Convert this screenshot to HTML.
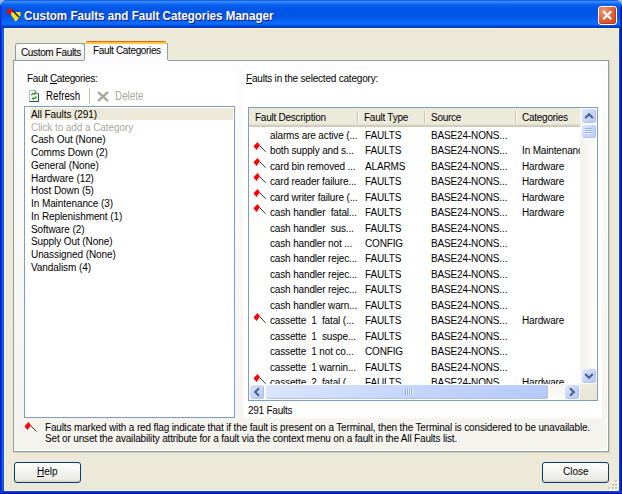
<!DOCTYPE html>
<html><head><meta charset="utf-8"><style>
*{margin:0;padding:0;box-sizing:border-box}
html,body{width:622px;height:494px;overflow:hidden;background:#A6BAE6}
body{position:relative;font-family:"Liberation Sans",sans-serif;}
.a{position:absolute}
.t{position:absolute;white-space:nowrap}
u{text-decoration:none;border-bottom:1px solid currentColor;display:inline-block;line-height:9px}
</style></head><body>
<div class="a" style="left:0px;top:0px;width:622px;height:494px;background:#0A3FD8;border-radius:7px 7px 0 0"></div>
<div class="a" style="left:0px;top:0px;width:622px;height:28px;border-radius:7px 7px 0 0;background:linear-gradient(#0A3DD6 0px,#2F84FF 1px,#3C92FF 2px,#1E72F8 3px,#0962EE 5px,#0056E6 8px,#0055E5 16px,#0A63F4 20px,#0D6AFA 24px,#0054E4 25.5px,#0040CE 26.5px,#0030B4 28px)"></div>
<div class="a" style="left:0px;top:6px;width:2px;height:22px;background:linear-gradient(90deg,#0A2ED0 0,#0A2ED0 1px,#0848E4 1px)"></div>
<div class="a" style="left:0px;top:28px;width:4px;height:466px;background:linear-gradient(90deg,#0019CF 0,#0019CF 1px,#0831D9 1px,#0831D9 2px,#166AEE 2px,#166AEE 3px,#0855DD 3px)"></div>
<div class="a" style="left:620px;top:6px;width:2px;height:22px;background:linear-gradient(90deg,#0036D8 0,#0036D8 1px,#001A9A 1px)"></div>
<div class="a" style="left:619px;top:28px;width:3px;height:466px;background:linear-gradient(90deg,#0046E8 0,#0046E8 1px,#0030D0 1px,#0030D0 2px,#001090 2px)"></div>
<div class="a" style="left:0px;top:491px;width:622px;height:3px;background:linear-gradient(#0046E8 0,#0046E8 1px,#0030D0 1px,#0030D0 2px,#001090 2px)"></div>
<div class="a" style="left:4px;top:28px;width:615px;height:463px;background:#ECE9D8;border:1px solid #FBF6E2;border-right-color:#FBF6E2"></div>
<svg class="a" style="left:4px;top:6px" width="20" height="18" viewBox="0 0 20 18">
<polygon points="7.1,6 16.5,6 16.5,9.6 11.8,15.8 7.1,9.1" fill="#F8E01A"/>
<line x1="9" y1="5" x2="15" y2="11" stroke="#000" stroke-width="1.2"/>
<polygon points="2,5.5 6.5,2 8.8,4.6 5.3,8.8" fill="#FF0000"/>
</svg><div class="t" style="left:23.5px;top:9.17px;font-size:12.5px;line-height:14px;color:#FFF;font-weight:bold;text-shadow:1px 1px 0 #0A1883;transform:scaleX(0.928);transform-origin:0 0;">Custom Faults and Fault Categories Manager</div>
<div class="a" style="left:598px;top:6px;width:19px;height:19px;border:1px solid #fff;border-radius:3px;background:radial-gradient(circle at 30% 25%,#EE9A78 0,#E0663A 45%,#C84418 100%);box-shadow:inset -1px -1px 0 #C43A10"></div>
<svg class="a" style="left:598px;top:6px" width="19" height="19" viewBox="0 0 19 19">
<path d="M5.2 5.2 L13.2 13.2 M13.2 5.2 L5.2 13.2" stroke="#fff" stroke-width="2.3" stroke-linecap="butt"/>
</svg><div class="a" style="left:13px;top:60px;width:596px;height:392px;border:1px solid #919B9C;background:linear-gradient(#FCFCFE,#F4F3EE);box-shadow:1px 1px 0 #D8D5C6, 2px 2px 0 #E4E1D1"></div>
<div class="a" style="left:607px;top:61px;width:1px;height:390px;background:#FFFFFF"></div>
<div class="a" style="left:14px;top:450px;width:594px;height:1px;background:#FFFFFF"></div>
<div class="a" style="left:15px;top:43px;width:70px;height:17px;border:1px solid #919B9C;border-bottom:none;border-radius:3px 3px 0 0;background:linear-gradient(#FFFFFF,#ECEBE6)"></div>
<div class="t" style="left:21px;top:45.53px;font-size:10px;line-height:14px;color:#000;letter-spacing:-0.35px;">Custom Faults</div>
<div class="a" style="left:84px;top:41px;width:84px;height:20px;background:#FCFCFE"></div>
<div class="a" style="left:84px;top:43px;width:1px;height:17px;background:#919B9C"></div>
<div class="a" style="left:167px;top:43px;width:1px;height:17px;background:#919B9C"></div>
<div class="a" style="left:85px;top:41px;width:82px;height:3px;border-radius:3px 3px 0 0;background:linear-gradient(#E5641C 0,#E5641C 1px,#FFC73C 1px)"></div>
<div class="t" style="left:93px;top:44.03px;font-size:10px;line-height:14px;color:#000;letter-spacing:-0.35px;">Fault Categories</div>
<div class="a" style="left:24px;top:70px;width:211px;height:348px;background:#FFFFFF"></div>
<div class="t" style="left:27px;top:72.03px;font-size:10px;line-height:14px;color:#000;letter-spacing:-0.35px;">Fault <u>C</u>ategories:</div>
<svg class="a" style="left:29px;top:90px" width="11" height="13" viewBox="0 0 11 13">
<path d="M0.5 0.5 H6.5 L9.5 3.5 V11.5 H0.5 Z" fill="#F4F7FC" stroke="#A9BAD6"/>
<path d="M9.5 3.5 V11.5 H0.5" fill="none" stroke="#2E4470"/>
<path d="M6.5 0.5 V3.5 H9.5" fill="#DCE5F2" stroke="#6A7FA6" stroke-width="0.8"/>
<path d="M2.3 5.2 Q3.5 3.2 6 3.6" fill="none" stroke="#3F9A10" stroke-width="1.5"/>
<path d="M5.3 1.9 L7.6 3.6 L5.3 5.3 Z" fill="#3F9A10"/>
<path d="M7.5 6.6 Q6.5 8.8 4 8.6" fill="none" stroke="#3F9A10" stroke-width="1.5"/>
<path d="M4.7 6.9 L2.4 8.6 L4.7 10.3 Z" fill="#3F9A10"/>
</svg><div class="t" style="left:45.5px;top:88.77px;font-size:12.5px;line-height:14px;color:#000;letter-spacing:0px;transform:scaleX(0.78);transform-origin:0 0;">Refresh</div>
<div class="a" style="left:89px;top:88px;width:1px;height:16px;background:#C5C2B2"></div>
<svg class="a" style="left:96px;top:90px" width="14" height="13" viewBox="0 0 14 13">
<path d="M2 1.8 L12 11.2 M12 1.8 L2 11.2" stroke="#ACA899" stroke-width="2.4"/>
</svg><div class="t" style="left:114.5px;top:88.87px;font-size:12.5px;line-height:14px;color:#ACA899;letter-spacing:0px;transform:scaleX(0.79);transform-origin:0 0;">Delete</div>
<div class="a" style="left:24px;top:106px;width:211px;height:312px;border:1px solid #7F9DB9;background:#FFFFFF"></div>
<div class="a" style="left:30px;top:108px;width:203px;height:12px;background:#ECE9D8"></div>
<div class="t" style="left:31px;top:107.83px;font-size:10px;line-height:14px;color:#000;letter-spacing:-0.08px;">All Faults (291)</div>
<div class="t" style="left:31px;top:120.59px;font-size:10px;line-height:14px;color:#ACA899;letter-spacing:-0.08px;">Click to add a Category</div>
<div class="t" style="left:31px;top:133.34px;font-size:10px;line-height:14px;color:#000;letter-spacing:-0.08px;">Cash Out (None)</div>
<div class="t" style="left:31px;top:146.09px;font-size:10px;line-height:14px;color:#000;letter-spacing:-0.08px;">Comms Down (2)</div>
<div class="t" style="left:31px;top:158.84px;font-size:10px;line-height:14px;color:#000;letter-spacing:-0.08px;">General (None)</div>
<div class="t" style="left:31px;top:171.59px;font-size:10px;line-height:14px;color:#000;letter-spacing:-0.08px;">Hardware (12)</div>
<div class="t" style="left:31px;top:184.34px;font-size:10px;line-height:14px;color:#000;letter-spacing:-0.08px;">Host Down (5)</div>
<div class="t" style="left:31px;top:197.09px;font-size:10px;line-height:14px;color:#000;letter-spacing:-0.08px;">In Maintenance (3)</div>
<div class="t" style="left:31px;top:209.84px;font-size:10px;line-height:14px;color:#000;letter-spacing:-0.08px;">In Replenishment (1)</div>
<div class="t" style="left:31px;top:222.59px;font-size:10px;line-height:14px;color:#000;letter-spacing:-0.08px;">Software (2)</div>
<div class="t" style="left:31px;top:235.34px;font-size:10px;line-height:14px;color:#000;letter-spacing:-0.08px;">Supply Out (None)</div>
<div class="t" style="left:31px;top:248.09px;font-size:10px;line-height:14px;color:#000;letter-spacing:-0.08px;">Unassigned (None)</div>
<div class="t" style="left:31px;top:260.84px;font-size:10px;line-height:14px;color:#000;letter-spacing:-0.08px;">Vandalism (4)</div>
<div class="a" style="left:243px;top:70px;width:359px;height:348px;background:#FFFFFF"></div>
<div class="t" style="left:246px;top:71.73px;font-size:10px;line-height:14px;color:#000;letter-spacing:-0.2px;"><u>F</u>aults in the selected category:</div>
<div class="a" style="left:248px;top:107px;width:350px;height:294px;border:1px solid #7F9DB9;background:#FFFFFF"></div>
<div class="a" style="left:249px;top:108px;width:331px;height:19px;background:linear-gradient(#EBEADB 0,#EBEADB 16px,#E2DECD 16px,#E2DECD 17px,#D6D2C2 17px,#D6D2C2 18px,#CBC7B8 18px)"></div>
<div class="a" style="left:357px;top:111px;width:1px;height:12px;background:#C7C5B2"></div>
<div class="a" style="left:358px;top:111px;width:1px;height:12px;background:#FFFFFF"></div>
<div class="a" style="left:424px;top:111px;width:1px;height:12px;background:#C7C5B2"></div>
<div class="a" style="left:425px;top:111px;width:1px;height:12px;background:#FFFFFF"></div>
<div class="a" style="left:515px;top:111px;width:1px;height:12px;background:#C7C5B2"></div>
<div class="a" style="left:516px;top:111px;width:1px;height:12px;background:#FFFFFF"></div>
<div class="t" style="left:255px;top:110.73px;font-size:10px;line-height:14px;color:#000;letter-spacing:-0.25px;">Fault Description</div>
<div class="t" style="left:364px;top:110.73px;font-size:10px;line-height:14px;color:#000;letter-spacing:-0.25px;">Fault Type</div>
<div class="t" style="left:431px;top:110.73px;font-size:10px;line-height:14px;color:#000;letter-spacing:-0.25px;">Source</div>
<div class="t" style="left:522px;top:110.73px;font-size:10px;line-height:14px;color:#000;letter-spacing:-0.25px;">Categories</div>
<div class="a" style="left:249px;top:127px;width:331px;height:257px;overflow:hidden">
<div class="a" style="left:-249px;top:-127px;width:622px;height:494px">
<div class="t" style="left:270px;top:128.73px;font-size:10px;line-height:14px;color:#000;letter-spacing:-0.15px;">alarms are active (...</div>
<div class="t" style="left:365px;top:128.73px;font-size:10px;line-height:14px;color:#000;letter-spacing:-0.15px;">FAULTS</div>
<div class="t" style="left:431px;top:128.73px;font-size:10px;line-height:14px;color:#000;letter-spacing:-0.15px;">BASE24-NONS...</div>
<svg class="a" style="left:253px;top:142.37px" width="14" height="11" viewBox="0 0 14 11">
<polygon points="0.5,4.3 4.5,0 7,3.3 3.5,8" fill="#FF0000"/>
<line x1="7" y1="4" x2="12.6" y2="9.7" stroke="#111" stroke-width="0.85"/>
</svg><div class="t" style="left:270px;top:144.20px;font-size:10px;line-height:14px;color:#000;letter-spacing:-0.15px;">both supply and s...</div>
<div class="t" style="left:365px;top:144.20px;font-size:10px;line-height:14px;color:#000;letter-spacing:-0.15px;">FAULTS</div>
<div class="t" style="left:431px;top:144.20px;font-size:10px;line-height:14px;color:#000;letter-spacing:-0.15px;">BASE24-NONS...</div>
<div class="t" style="left:522px;top:144.20px;font-size:10px;line-height:14px;color:#000;letter-spacing:-0.15px;width:58px;overflow:hidden;">In Maintenance</div>
<svg class="a" style="left:253px;top:157.84px" width="14" height="11" viewBox="0 0 14 11">
<polygon points="0.5,4.3 4.5,0 7,3.3 3.5,8" fill="#FF0000"/>
<line x1="7" y1="4" x2="12.6" y2="9.7" stroke="#111" stroke-width="0.85"/>
</svg><div class="t" style="left:270px;top:159.67px;font-size:10px;line-height:14px;color:#000;letter-spacing:-0.15px;">card bin removed ...</div>
<div class="t" style="left:365px;top:159.67px;font-size:10px;line-height:14px;color:#000;letter-spacing:-0.15px;">ALARMS</div>
<div class="t" style="left:431px;top:159.67px;font-size:10px;line-height:14px;color:#000;letter-spacing:-0.15px;">BASE24-NONS...</div>
<div class="t" style="left:522px;top:159.67px;font-size:10px;line-height:14px;color:#000;letter-spacing:-0.15px;width:58px;overflow:hidden;">Hardware</div>
<svg class="a" style="left:253px;top:173.31px" width="14" height="11" viewBox="0 0 14 11">
<polygon points="0.5,4.3 4.5,0 7,3.3 3.5,8" fill="#FF0000"/>
<line x1="7" y1="4" x2="12.6" y2="9.7" stroke="#111" stroke-width="0.85"/>
</svg><div class="t" style="left:270px;top:175.14px;font-size:10px;line-height:14px;color:#000;letter-spacing:-0.15px;">card reader failure...</div>
<div class="t" style="left:365px;top:175.14px;font-size:10px;line-height:14px;color:#000;letter-spacing:-0.15px;">FAULTS</div>
<div class="t" style="left:431px;top:175.14px;font-size:10px;line-height:14px;color:#000;letter-spacing:-0.15px;">BASE24-NONS...</div>
<div class="t" style="left:522px;top:175.14px;font-size:10px;line-height:14px;color:#000;letter-spacing:-0.15px;width:58px;overflow:hidden;">Hardware</div>
<svg class="a" style="left:253px;top:188.78px" width="14" height="11" viewBox="0 0 14 11">
<polygon points="0.5,4.3 4.5,0 7,3.3 3.5,8" fill="#FF0000"/>
<line x1="7" y1="4" x2="12.6" y2="9.7" stroke="#111" stroke-width="0.85"/>
</svg><div class="t" style="left:270px;top:190.61px;font-size:10px;line-height:14px;color:#000;letter-spacing:-0.15px;">card writer failure (...</div>
<div class="t" style="left:365px;top:190.61px;font-size:10px;line-height:14px;color:#000;letter-spacing:-0.15px;">FAULTS</div>
<div class="t" style="left:431px;top:190.61px;font-size:10px;line-height:14px;color:#000;letter-spacing:-0.15px;">BASE24-NONS...</div>
<div class="t" style="left:522px;top:190.61px;font-size:10px;line-height:14px;color:#000;letter-spacing:-0.15px;width:58px;overflow:hidden;">Hardware</div>
<svg class="a" style="left:253px;top:204.25px" width="14" height="11" viewBox="0 0 14 11">
<polygon points="0.5,4.3 4.5,0 7,3.3 3.5,8" fill="#FF0000"/>
<line x1="7" y1="4" x2="12.6" y2="9.7" stroke="#111" stroke-width="0.85"/>
</svg><div class="t" style="left:270px;top:206.09px;font-size:10px;line-height:14px;color:#000;letter-spacing:-0.15px;">cash handler&nbsp; fatal...</div>
<div class="t" style="left:365px;top:206.09px;font-size:10px;line-height:14px;color:#000;letter-spacing:-0.15px;">FAULTS</div>
<div class="t" style="left:431px;top:206.09px;font-size:10px;line-height:14px;color:#000;letter-spacing:-0.15px;">BASE24-NONS...</div>
<div class="t" style="left:522px;top:206.09px;font-size:10px;line-height:14px;color:#000;letter-spacing:-0.15px;width:58px;overflow:hidden;">Hardware</div>
<div class="t" style="left:270px;top:221.55px;font-size:10px;line-height:14px;color:#000;letter-spacing:-0.15px;">cash handler&nbsp; sus...</div>
<div class="t" style="left:365px;top:221.55px;font-size:10px;line-height:14px;color:#000;letter-spacing:-0.15px;">FAULTS</div>
<div class="t" style="left:431px;top:221.55px;font-size:10px;line-height:14px;color:#000;letter-spacing:-0.15px;">BASE24-NONS...</div>
<div class="t" style="left:270px;top:237.03px;font-size:10px;line-height:14px;color:#000;letter-spacing:-0.15px;">cash handler not ...</div>
<div class="t" style="left:365px;top:237.03px;font-size:10px;line-height:14px;color:#000;letter-spacing:-0.15px;">CONFIG</div>
<div class="t" style="left:431px;top:237.03px;font-size:10px;line-height:14px;color:#000;letter-spacing:-0.15px;">BASE24-NONS...</div>
<div class="t" style="left:270px;top:252.49px;font-size:10px;line-height:14px;color:#000;letter-spacing:-0.15px;">cash handler rejec...</div>
<div class="t" style="left:365px;top:252.49px;font-size:10px;line-height:14px;color:#000;letter-spacing:-0.15px;">FAULTS</div>
<div class="t" style="left:431px;top:252.49px;font-size:10px;line-height:14px;color:#000;letter-spacing:-0.15px;">BASE24-NONS...</div>
<div class="t" style="left:270px;top:267.97px;font-size:10px;line-height:14px;color:#000;letter-spacing:-0.15px;">cash handler rejec...</div>
<div class="t" style="left:365px;top:267.97px;font-size:10px;line-height:14px;color:#000;letter-spacing:-0.15px;">FAULTS</div>
<div class="t" style="left:431px;top:267.97px;font-size:10px;line-height:14px;color:#000;letter-spacing:-0.15px;">BASE24-NONS...</div>
<div class="t" style="left:270px;top:283.44px;font-size:10px;line-height:14px;color:#000;letter-spacing:-0.15px;">cash handler rejec...</div>
<div class="t" style="left:365px;top:283.44px;font-size:10px;line-height:14px;color:#000;letter-spacing:-0.15px;">FAULTS</div>
<div class="t" style="left:431px;top:283.44px;font-size:10px;line-height:14px;color:#000;letter-spacing:-0.15px;">BASE24-NONS...</div>
<div class="t" style="left:270px;top:298.91px;font-size:10px;line-height:14px;color:#000;letter-spacing:-0.15px;">cash handler warn...</div>
<div class="t" style="left:365px;top:298.91px;font-size:10px;line-height:14px;color:#000;letter-spacing:-0.15px;">FAULTS</div>
<div class="t" style="left:431px;top:298.91px;font-size:10px;line-height:14px;color:#000;letter-spacing:-0.15px;">BASE24-NONS...</div>
<svg class="a" style="left:253px;top:312.54px" width="14" height="11" viewBox="0 0 14 11">
<polygon points="0.5,4.3 4.5,0 7,3.3 3.5,8" fill="#FF0000"/>
<line x1="7" y1="4" x2="12.6" y2="9.7" stroke="#111" stroke-width="0.85"/>
</svg><div class="t" style="left:270px;top:314.38px;font-size:10px;line-height:14px;color:#000;letter-spacing:-0.15px;">cassette&nbsp; 1&nbsp; fatal (...</div>
<div class="t" style="left:365px;top:314.38px;font-size:10px;line-height:14px;color:#000;letter-spacing:-0.15px;">FAULTS</div>
<div class="t" style="left:431px;top:314.38px;font-size:10px;line-height:14px;color:#000;letter-spacing:-0.15px;">BASE24-NONS...</div>
<div class="t" style="left:522px;top:314.38px;font-size:10px;line-height:14px;color:#000;letter-spacing:-0.15px;width:58px;overflow:hidden;">Hardware</div>
<div class="t" style="left:270px;top:329.85px;font-size:10px;line-height:14px;color:#000;letter-spacing:-0.15px;">cassette&nbsp; 1&nbsp; suspe...</div>
<div class="t" style="left:365px;top:329.85px;font-size:10px;line-height:14px;color:#000;letter-spacing:-0.15px;">FAULTS</div>
<div class="t" style="left:431px;top:329.85px;font-size:10px;line-height:14px;color:#000;letter-spacing:-0.15px;">BASE24-NONS...</div>
<div class="t" style="left:270px;top:345.31px;font-size:10px;line-height:14px;color:#000;letter-spacing:-0.15px;">cassette&nbsp; 1 not co...</div>
<div class="t" style="left:365px;top:345.31px;font-size:10px;line-height:14px;color:#000;letter-spacing:-0.15px;">CONFIG</div>
<div class="t" style="left:431px;top:345.31px;font-size:10px;line-height:14px;color:#000;letter-spacing:-0.15px;">BASE24-NONS...</div>
<div class="t" style="left:270px;top:360.79px;font-size:10px;line-height:14px;color:#000;letter-spacing:-0.15px;">cassette&nbsp; 1 warnin...</div>
<div class="t" style="left:365px;top:360.79px;font-size:10px;line-height:14px;color:#000;letter-spacing:-0.15px;">FAULTS</div>
<div class="t" style="left:431px;top:360.79px;font-size:10px;line-height:14px;color:#000;letter-spacing:-0.15px;">BASE24-NONS...</div>
<svg class="a" style="left:253px;top:374.42px" width="14" height="11" viewBox="0 0 14 11">
<polygon points="0.5,4.3 4.5,0 7,3.3 3.5,8" fill="#FF0000"/>
<line x1="7" y1="4" x2="12.6" y2="9.7" stroke="#111" stroke-width="0.85"/>
</svg><div class="t" style="left:270px;top:376.26px;font-size:10px;line-height:14px;color:#000;letter-spacing:-0.15px;">cassette&nbsp; 2&nbsp; fatal (...</div>
<div class="t" style="left:365px;top:376.26px;font-size:10px;line-height:14px;color:#000;letter-spacing:-0.15px;">FAULTS</div>
<div class="t" style="left:431px;top:376.26px;font-size:10px;line-height:14px;color:#000;letter-spacing:-0.15px;">BASE24-NONS...</div>
<div class="t" style="left:522px;top:376.26px;font-size:10px;line-height:14px;color:#000;letter-spacing:-0.15px;width:58px;overflow:hidden;">Hardware</div>
</div></div>
<div class="a" style="left:580px;top:108px;width:17px;height:276px;background:linear-gradient(90deg,#F3F1EC,#FEFEFB)"></div>
<div class="a" style="left:581px;top:108px;width:16px;height:16px;border:1px solid #FFFFFF;border-radius:3px;background:linear-gradient(135deg,#DCE6FD,#C6D5FD 50%,#B7C9F8);box-shadow:inset -1px -1px 0 #AEC2F2"></div>
<svg class="a" style="left:581px;top:108px" width="16" height="16"><path d="M4.2 10 L8 6.2 L11.8 10" fill="none" stroke="#4D6185" stroke-width="2.1"/></svg>
<div class="a" style="left:581px;top:124px;width:16px;height:15px;border:1px solid #FFFFFF;border-radius:3px;background:linear-gradient(135deg,#DCE6FD,#C6D5FD 50%,#B7C9F8);box-shadow:inset -1px -1px 0 #AEC2F2"></div>
<div class="a" style="left:585px;top:128px;width:7px;height:1px;background:#8EACF2;box-shadow:0 1px 0 #EEF4FE"></div>
<div class="a" style="left:585px;top:130px;width:7px;height:1px;background:#8EACF2;box-shadow:0 1px 0 #EEF4FE"></div>
<div class="a" style="left:585px;top:132px;width:7px;height:1px;background:#8EACF2;box-shadow:0 1px 0 #EEF4FE"></div>
<div class="a" style="left:581px;top:368px;width:16px;height:16px;border:1px solid #FFFFFF;border-radius:3px;background:linear-gradient(135deg,#DCE6FD,#C6D5FD 50%,#B7C9F8);box-shadow:inset -1px -1px 0 #AEC2F2"></div>
<svg class="a" style="left:581px;top:368px" width="16" height="16"><path d="M4.2 6 L8 9.8 L11.8 6" fill="none" stroke="#4D6185" stroke-width="2.1"/></svg>
<div class="a" style="left:249px;top:384px;width:331px;height:16px;background:linear-gradient(#F3F1EC,#FEFEFB)"></div>
<div class="a" style="left:249px;top:384px;width:16px;height:16px;border:1px solid #FFFFFF;border-radius:3px;background:linear-gradient(135deg,#DCE6FD,#C6D5FD 50%,#B7C9F8);box-shadow:inset -1px -1px 0 #AEC2F2"></div>
<svg class="a" style="left:249px;top:384px" width="16" height="16"><path d="M10 4.2 L6.2 8 L10 11.8" fill="none" stroke="#4D6185" stroke-width="2.1"/></svg>
<div class="a" style="left:265px;top:384px;width:284px;height:16px;border:1px solid #FFFFFF;border-radius:3px;background:linear-gradient(135deg,#DCE6FD,#C6D5FD 50%,#B7C9F8);box-shadow:inset -1px -1px 0 #AEC2F2"></div>
<div class="a" style="left:405px;top:388px;width:1px;height:7px;background:#8EACF2;box-shadow:1px 0 0 #EEF4FE"></div>
<div class="a" style="left:407px;top:388px;width:1px;height:7px;background:#8EACF2;box-shadow:1px 0 0 #EEF4FE"></div>
<div class="a" style="left:409px;top:388px;width:1px;height:7px;background:#8EACF2;box-shadow:1px 0 0 #EEF4FE"></div>
<div class="a" style="left:411px;top:388px;width:1px;height:7px;background:#8EACF2;box-shadow:1px 0 0 #EEF4FE"></div>
<div class="a" style="left:564px;top:384px;width:16px;height:16px;border:1px solid #FFFFFF;border-radius:3px;background:linear-gradient(135deg,#DCE6FD,#C6D5FD 50%,#B7C9F8);box-shadow:inset -1px -1px 0 #AEC2F2"></div>
<svg class="a" style="left:564px;top:384px" width="16" height="16"><path d="M6 4.2 L9.8 8 L6 11.8" fill="none" stroke="#4D6185" stroke-width="2.1"/></svg>
<div class="a" style="left:580px;top:384px;width:17px;height:16px;background:linear-gradient(#EEEBDD,#E8E5D4)"></div>
<div class="t" style="left:248px;top:403.54px;font-size:10px;line-height:14px;color:#000;letter-spacing:-0.25px;">291 Faults</div>
<svg class="a" style="left:24px;top:422px" width="14" height="11" viewBox="0 0 14 11">
<polygon points="0.5,4.3 4.5,0 7,3.3 3.5,8" fill="#FF0000"/>
<line x1="7" y1="4" x2="12.6" y2="9.7" stroke="#111" stroke-width="0.85"/>
</svg><div class="t" style="left:45px;top:420.64px;font-size:10px;line-height:14px;color:#000;letter-spacing:-0.15px;">Faults marked with a red flag indicate that if the fault is present on a Terminal, then the Terminal is considered to be unavailable.</div>
<div class="t" style="left:45px;top:432.24px;font-size:10px;line-height:14px;color:#000;letter-spacing:-0.17px;">Set or unset the availability attribute for a fault via the context menu on a fault in the All Faults list.</div>
<div class="a" style="left:14px;top:462px;width:67px;height:21px;border:1px solid #003C74;border-radius:3px;background:linear-gradient(#FFFFFF 0,#F7F7F4 30%,#ECEBE6 85%,#D6D0C5 100%)"></div>
<div class="t" style="left:37px;top:464.64px;font-size:10px;line-height:14px;color:#000;letter-spacing:0px;"><u>H</u>elp</div>
<div class="a" style="left:542px;top:462px;width:67px;height:21px;border:1px solid #003C74;border-radius:3px;background:linear-gradient(#FFFFFF 0,#F7F7F4 30%,#ECEBE6 85%,#D6D0C5 100%)"></div>
<div class="t" style="left:563px;top:464.64px;font-size:10px;line-height:14px;color:#000;letter-spacing:0px;">Close</div>
<div class="a" style="left:615px;top:480px;width:2px;height:2px;background:#C6C3B3;box-shadow:1px 1px 0 #FFFFFF"></div>
<div class="a" style="left:612px;top:484px;width:2px;height:2px;background:#C6C3B3;box-shadow:1px 1px 0 #FFFFFF"></div>
<div class="a" style="left:615px;top:484px;width:2px;height:2px;background:#C6C3B3;box-shadow:1px 1px 0 #FFFFFF"></div>
<div class="a" style="left:608px;top:487px;width:2px;height:2px;background:#C6C3B3;box-shadow:1px 1px 0 #FFFFFF"></div>
<div class="a" style="left:612px;top:487px;width:2px;height:2px;background:#C6C3B3;box-shadow:1px 1px 0 #FFFFFF"></div>
<div class="a" style="left:615px;top:487px;width:2px;height:2px;background:#C6C3B3;box-shadow:1px 1px 0 #FFFFFF"></div>
</body></html>
